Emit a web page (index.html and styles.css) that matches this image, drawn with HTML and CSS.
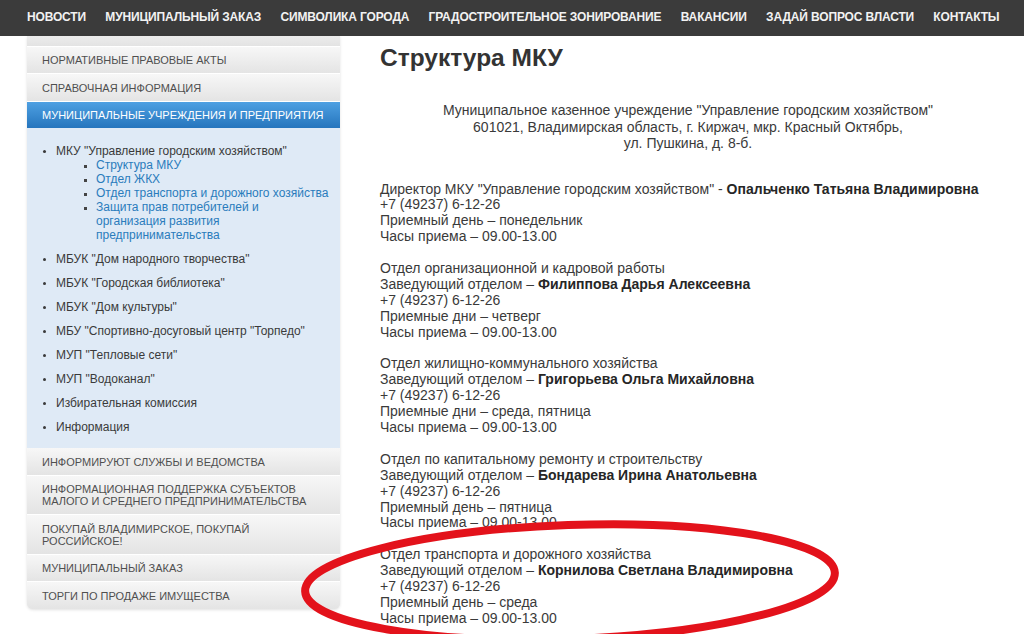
FILE: index.html
```html
<!DOCTYPE html>
<html lang="ru">
<head>
<meta charset="utf-8">
<title>Структура МКУ</title>
<link rel="stylesheet" href="styles.css">
</head>
<body>
<header class="topnav">
  <nav class="topnav-list">
    <a class="topnav-link" href="#">НОВОСТИ</a>
    <a class="topnav-link" href="#">МУНИЦИПАЛЬНЫЙ ЗАКАЗ</a>
    <a class="topnav-link" href="#">СИМВОЛИКА ГОРОДА</a>
    <a class="topnav-link" href="#">ГРАДОСТРОИТЕЛЬНОЕ ЗОНИРОВАНИЕ</a>
    <a class="topnav-link" href="#">ВАКАНСИИ</a>
    <a class="topnav-link" href="#">ЗАДАЙ ВОПРОС ВЛАСТИ</a>
    <a class="topnav-link" href="#">КОНТАКТЫ</a>
  </nav>
</header>

<div class="page">
  <aside class="sidebar">
    <div class="side-item side-item--cut"></div>
    <a class="side-item" href="#">НОРМАТИВНЫЕ ПРАВОВЫЕ АКТЫ</a>
    <a class="side-item" href="#">СПРАВОЧНАЯ ИНФОРМАЦИЯ</a>
    <a class="side-item side-item--active" href="#">МУНИЦИПАЛЬНЫЕ УЧРЕЖДЕНИЯ И ПРЕДПРИЯТИЯ</a>
    <div class="side-panel">
      <ul class="org-list">
        <li>МКУ "Управление городским хозяйством"
          <ul class="sub-list">
            <li><a href="#">Структура МКУ</a></li>
            <li><a href="#">Отдел ЖКХ</a></li>
            <li><a href="#">Отдел транспорта и дорожного хозяйства</a></li>
            <li><a href="#">Защита прав потребителей и организация развития предпринимательства</a></li>
          </ul>
        </li>
        <li>МБУК "Дом народного творчества"</li>
        <li>МБУК "Городская библиотека"</li>
        <li>МБУК "Дом культуры"</li>
        <li>МБУ "Спортивно-досуговый центр "Торпедо"</li>
        <li>МУП "Тепловые сети"</li>
        <li>МУП "Водоканал"</li>
        <li>Избирательная комиссия</li>
        <li>Информация</li>
      </ul>
    </div>
    <a class="side-item" href="#">ИНФОРМИРУЮТ СЛУЖБЫ И ВЕДОМСТВА</a>
    <a class="side-item" href="#">ИНФОРМАЦИОННАЯ ПОДДЕРЖКА СУБЪЕКТОВ МАЛОГО И СРЕДНЕГО ПРЕДПРИНИМАТЕЛЬСТВА</a>
    <a class="side-item" href="#">ПОКУПАЙ ВЛАДИМИРСКОЕ, ПОКУПАЙ РОССИЙСКОЕ!</a>
    <a class="side-item" href="#">МУНИЦИПАЛЬНЫЙ ЗАКАЗ</a>
    <a class="side-item side-item--last" href="#">ТОРГИ ПО ПРОДАЖЕ ИМУЩЕСТВА</a>
  </aside>

  <main class="content">
    <h1 class="title">Структура МКУ</h1>
    <p class="address">Муниципальное казенное учреждение "Управление городским хозяйством"<br>601021, Владимирская область, г. Киржач, мкр. Красный Октябрь,<br>ул. Пушкина, д. 8-б.</p>

    <p class="dept">Директор МКУ "Управление городским хозяйством" - <b>Опальченко Татьяна Владимировна</b><br>+7 (49237) 6-12-26<br>Приемный день – понедельник<br>Часы приема – 09.00-13.00</p>

    <p class="dept">Отдел организационной и кадровой работы<br>Заведующий отделом – <b>Филиппова Дарья Алексеевна</b><br>+7 (49237) 6-12-26<br>Приемные дни – четверг<br>Часы приема – 09.00-13.00</p>

    <p class="dept">Отдел жилищно-коммунального хозяйства<br>Заведующий отделом – <b>Григорьева Ольга Михайловна</b><br>+7 (49237) 6-12-26<br>Приемные дни – среда, пятница<br>Часы приема – 09.00-13.00</p>

    <p class="dept">Отдел по капитальному ремонту и строительству<br>Заведующий отделом – <b>Бондарева Ирина Анатольевна</b><br>+7 (49237) 6-12-26<br>Приемный день – пятница<br>Часы приема – 09.00-13.00</p>

    <p class="dept">Отдел транспорта и дорожного хозяйства<br>Заведующий отделом – <b>Корнилова Светлана Владимировна</b><br>+7 (49237) 6-12-26<br>Приемный день – среда<br>Часы приема – 09.00-13.00</p>
  </main>
</div>

<svg class="annotation" viewBox="0 0 1024 634" aria-hidden="true">
  <ellipse cx="570" cy="582" rx="265" ry="57" transform="rotate(-2 570 582)" fill="none" stroke="#e3121b" stroke-width="8"/>
</svg>
</body>
</html>
```

FILE: styles.css
```css
* { box-sizing: border-box; }

html, body {
  margin: 0;
  padding: 0;
  background: #ffffff;
  font-family: "Liberation Sans", Arial, sans-serif;
  color: #333333;
  overflow: hidden;
}

body {
  position: relative;
  width: 1024px;
  height: 634px;
}

a { text-decoration: none; }

/* Top navigation */
.topnav {
  height: 36px;
  background: #3b3b3b;
}

.topnav-list {
  display: flex;
  align-items: center;
  height: 100%;
  padding-left: 27px;
  padding-bottom: 2px;
  gap: 19.3px;
}

.topnav-link {
  color: #f2f2f2;
  font-size: 12px;
  font-weight: bold;
  letter-spacing: -0.15px;
  white-space: nowrap;
}

/* Page layout */
.page {
  display: flex;
  align-items: flex-start;
  padding-left: 27px;
  gap: 40px;
}

/* Sidebar */
.sidebar {
  width: 313px;
  flex: none;
  display: flex;
  flex-direction: column;
  border-radius: 0 0 6px 6px;
  box-shadow: 0 1px 3px rgba(0, 0, 0, 0.12);
  overflow: hidden;
  background: #e9e9e9;
}

.side-item {
  display: block;
  padding: 7.3px 15px 7.2px;
  font-size: 11px;
  line-height: 12px;
  color: #4f4f4f;
  background: linear-gradient(#f7f7f7, #e4e4e4);
  border-bottom: 1px solid #ffffff;
}

.side-item--cut {
  height: 11px;
  padding: 0;
  background: linear-gradient(#ececec, #e3e3e3);
}

.side-item--active {
  color: #ffffff;
  background: linear-gradient(#4ea0e2, #2575bd);
  border-bottom: 0;
}

.side-item--last {
  border-bottom: 0;
}

.side-panel {
  background: #dfeaf6;
  padding: 16px 10px 14px 0;
}

.org-list {
  margin: 0;
  padding-left: 29px;
  list-style: disc;
  font-size: 12px;
  line-height: 14px;
  color: #3a3a3a;
}

.org-list > li + li {
  margin-top: 10px;
}

.org-list > li::marker {
  font-size: 10px;
}

.sub-list {
  margin: 0;
  padding-left: 40px;
  list-style: square;
}

.sub-list li::marker {
  font-size: 9px;
  color: #444;
}

.sub-list a {
  color: #2a7cbc;
}

/* Content */
.content {
  width: 616px;
  font-size: 14px;
}

.title {
  margin: 8px 0 0;
  font-size: 24.5px;
  line-height: 28px;
  font-weight: bold;
  color: #333333;
}

.address {
  margin: 30px 0 30px;
  text-align: center;
  line-height: 16.5px;
  color: #3a3a3a;
}

.dept {
  margin: 0 0 15.9px;
  line-height: 15.9px;
  color: #3a3a3a;
}

.dept b {
  color: #262626;
}

/* Red hand-drawn annotation */
.annotation {
  position: absolute;
  left: 0;
  top: 0;
  width: 1024px;
  height: 634px;
  pointer-events: none;
}
```
